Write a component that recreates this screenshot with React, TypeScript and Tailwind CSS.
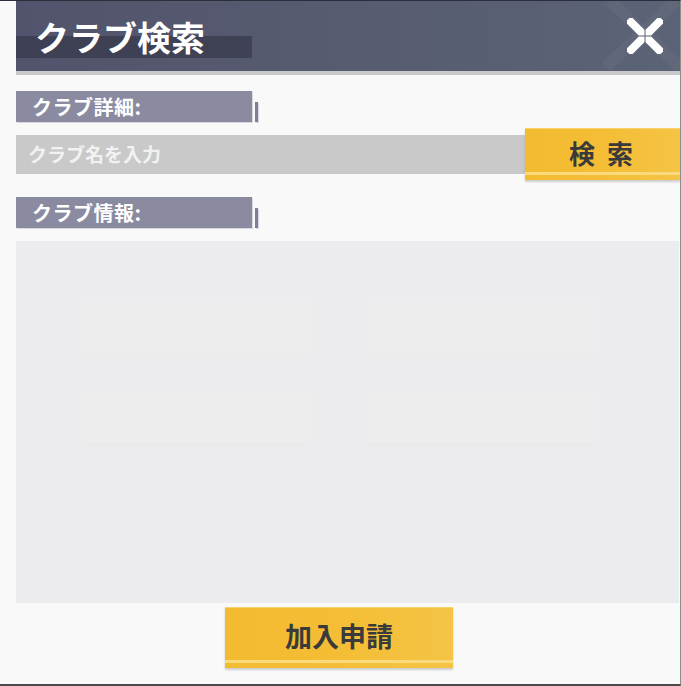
const font = { fontFamily: '"Noto Sans CJK JP", "Noto Sans", sans-serif' };

function SectionLabel({ text }: { text: string }) {
    return (
        <div className="flex items-end">
            <div className="flex h-[31px] w-[236px] items-center bg-[#8a8aa1] pl-4 text-[20px] font-bold tracking-[0.5px] text-white shadow-[1px_1px_0_#d8d8e0]">
                {text}
            </div>
            <div className="ml-[3px] h-[20px] w-[3px] bg-[#7e7f94] shadow-[1px_1px_0_#d8d8e0]" />
        </div>
    );
}

function YellowButton({ label, className, textClass }: { label: string; className: string; textClass: string }) {
    return (
        <button
            type="button"
            className={`relative flex items-center justify-center border-t border-[#f7d36a] bg-gradient-to-r from-[#f3bb30] via-[#f4bd35] to-[#f5c445] text-[#3a3a3a] shadow-[0_2px_2px_rgba(0,0,0,0.18)] ${className}`}
        >
            <span className={`relative -mt-1 ${textClass}`}>{label}</span>
            <span className="absolute bottom-[5px] left-0 right-0 h-[3px] bg-[#f9db7e]" />
        </button>
    );
}

function CloseIcon() {
    return (
        <svg width="36" height="36" viewBox="0 0 36 36">
            <line x1="4" y1="4" x2="32" y2="32" stroke="white" strokeWidth="8" strokeLinecap="square" />
            <line x1="32" y1="4" x2="4" y2="32" stroke="white" strokeWidth="8" strokeLinecap="square" />
            <line x1="18" y1="12" x2="18" y2="24" stroke="#5a6073" strokeWidth="1" />
            <line x1="12" y1="18" x2="24" y2="18" stroke="#5a6073" strokeWidth="1" />
        </svg>
    );
}

export default function App() {
    return (
        <div
            style={font}
            className="relative flex h-[686px] w-[681px] flex-col overflow-hidden border-t border-b-2 border-r border-t-[#2b2e3b] border-b-[#4a4a4a] border-r-[#8c8c8c] bg-[#f9f9f9] pl-4"
        >
            <header className="relative flex h-[70px] shrink-0 items-center bg-gradient-to-r from-[#52536c] via-[#575c70] to-[#5b6376]">
                <div className="absolute left-0 top-[35px] h-[22px] w-[236px] bg-[#36374a]/70" />
                <h1 className="relative pl-[19px] text-[34px] font-bold text-white">クラブ検索</h1>
                <svg className="absolute right-0 top-0" width="82" height="70" viewBox="0 0 82 70">
                    <line x1="12" y1="0" x2="82" y2="66" stroke="#6a7183" strokeOpacity="0.4" strokeWidth="12" />
                    <line x1="78" y1="0" x2="8" y2="66" stroke="#6a7183" strokeOpacity="0.4" strokeWidth="12" />
                </svg>
                <div className="absolute right-[17px] top-[17px]">
                    <CloseIcon />
                </div>
            </header>
            <div className="h-[4px] shrink-0 bg-[#c9c9cc]" />

            <div className="mt-4">
                <SectionLabel text="クラブ詳細:" />
            </div>

            <div className="mt-[6px] flex h-[52px] items-center">
                <div className="flex h-[39px] w-[509px] items-center bg-[#c9c9c9] pl-3 text-[19px] font-bold text-[#f2f2f2]">
                    クラブ名を入力
                </div>
                <YellowButton label="検 索" className="h-[52px] w-[155px]" textClass="text-[26px] font-bold tracking-[3px]" />
            </div>

            <div className="mt-[17px]">
                <SectionLabel text="クラブ情報:" />
            </div>

            <div className="mt-[13px] h-[362px] w-[663px] bg-[#ececee] pl-[66px] pt-[61px]">
                <div className="grid w-[513px] grid-cols-2 gap-x-[59px] gap-y-[39px]">
                    <div className="h-[51px] bg-[#ededee] shadow-[0_3px_0_#ebebec]" />
                    <div className="h-[51px] bg-[#ededee] shadow-[0_3px_0_#ebebec]" />
                    <div className="h-[51px] bg-[#ededee] shadow-[0_3px_0_#ebebec]" />
                    <div className="h-[51px] bg-[#ededee] shadow-[0_3px_0_#ebebec]" />
                </div>
            </div>

            <div className="mt-[4px] flex pl-[209px]">
                <YellowButton label="加入申請" className="h-[61px] w-[228px]" textClass="text-[27px] font-bold" />
            </div>
        </div>
    );
}
